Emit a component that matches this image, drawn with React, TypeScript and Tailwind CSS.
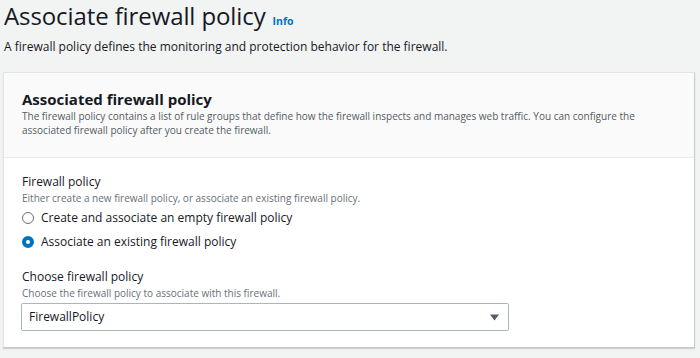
import React from "react";

export default function App() {
  const font = { fontFamily: '"Open Sans", "Noto Sans", sans-serif' };
  return (
    <div className="w-[700px] h-[358px] bg-[#f2f3f3] text-[#16191f] overflow-hidden" style={font}>
      <div className="pl-[4px] pt-[1px]">
        <div className="flex items-baseline gap-[7px]">
          <h1 className="text-[24px] leading-[30px] font-normal tracking-[-0.1px]">Associate firewall policy</h1>
          <span className="text-[10.5px] font-bold text-[#0073bb]">Info</span>
        </div>
        <p className="text-[12px] leading-[18px] mt-[7px]">A firewall policy defines the monitoring and protection behavior for the firewall.</p>
      </div>
      <div className="ml-[3px] mt-[16px] w-[692px] h-[276px] bg-white border border-[#e3e6e6] border-r-[#c9cccc] border-b-[#c4c8c8] shadow-[0_1px_1px_0_rgba(0,28,36,0.15)]">
        <div className="bg-[#fafafa] border-b border-[#eaeded] px-[18px] pt-[16px] pb-[20px]">
          <h2 className="text-[15px] font-bold leading-[20px]">Associated firewall policy</h2>
          <p className="text-[10px] leading-[14px] text-[#545b64]">
            The firewall policy contains a list of rule groups that define how the firewall inspects and manages web traffic. You can configure the associated firewall policy after you create the firewall.
          </p>
        </div>
        <div className="px-[18px] pt-[16px]">
          <div className="text-[12px] leading-[16px]">Firewall policy</div>
          <div className="mt-[1px] text-[10px] leading-[14px] text-[#687078]">Either create a new firewall policy, or associate an existing firewall policy.</div>
          <div className="mt-[3px] flex flex-col gap-[4px]">
            <label className="flex items-center gap-[7px] h-[20px] text-[12px]">
              <span className="w-[12px] h-[12px] rounded-full border border-[#687078] bg-white" />
              Create and associate an empty firewall policy
            </label>
            <label className="flex items-center gap-[7px] h-[20px] text-[12px]">
              <span className="w-[12px] h-[12px] rounded-full border-[4px] border-[#0073bb] bg-white" />
              Associate an existing firewall policy
            </label>
          </div>
          <div className="mt-[17px] text-[12px] leading-[16px]">Choose firewall policy</div>
          <div className="mt-[1px] text-[10px] leading-[14px] text-[#687078]">Choose the firewall policy to associate with this firewall.</div>
          <div className="mt-[3px] ml-[-1px] w-[488px] h-[28px] border border-[#aab7b8] rounded-[2px] bg-white flex items-center justify-between pl-[7px] pr-[9px] text-[12px]">
            <span>FirewallPolicy</span>
            <svg width="9" height="7" viewBox="0 0 9 7"><path d="M0 0.5h9L4.5 6.5z" fill="#545b64" /></svg>
          </div>
        </div>
      </div>
    </div>
  );
}
